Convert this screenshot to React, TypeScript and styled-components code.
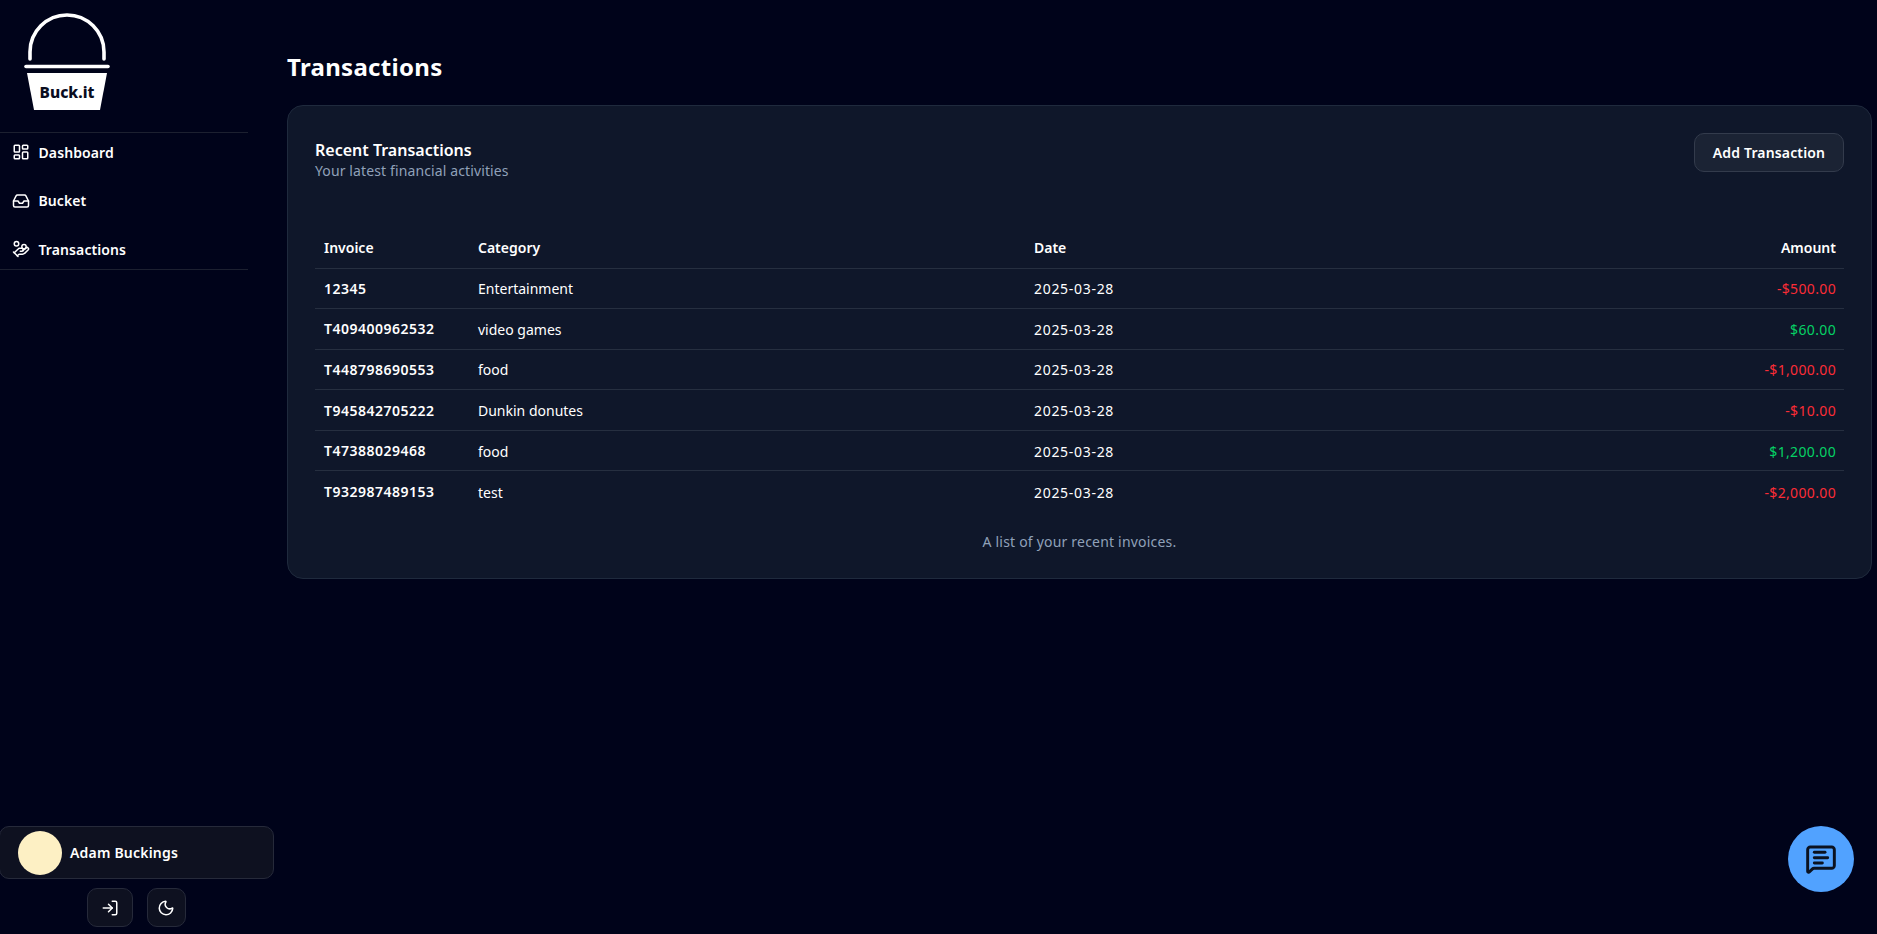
import React from "react";
import styled, { createGlobalStyle } from "styled-components";
import { LayoutDashboard, Inbox, HandCoins, LogIn, Moon, MessageSquareText } from "lucide-react";

const Global = createGlobalStyle`
  html, body { margin: 0; padding: 0; height: 100%; background: #00031a; }
  body { font-family: "Noto Sans", "Open Sans", sans-serif; color: #fff; overflow: hidden; }
  * { box-sizing: border-box; }
`;

const Shell = styled.div`
  display: flex;
  height: 934px;
  background: #00031a;
`;
const Sidebar = styled.aside`
  width: 248px;
  flex: none;
  display: flex;
  flex-direction: column;
`;
const LogoWrap = styled.div`
  height: 133px;
  flex: none;
  padding-left: 22px;
  border-bottom: 1px solid #1c2030;
`;
const Nav = styled.nav`
  display: flex;
  flex-direction: column;
  gap: 10.5px;
  height: 137px;
  flex: none;
  padding: 0 0 0 12px;
  border-bottom: 1px solid #1c2030;
`;
const NavItem = styled.a`
  display: flex;
  align-items: center;
  gap: 8.5px;
  height: 38px;
  flex: none;
  font-size: 14px;
  font-weight: 600;
  letter-spacing: 0.1px;
  color: #fff;
`;
const UserArea = styled.div`
  margin-top: auto;
  margin-left: -1px;
  display: flex;
  flex-direction: column;
  align-items: center;
  width: 275px;
  padding-bottom: 7px;
`;
const UserCard = styled.div`
  width: 275px;
  height: 53px;
  display: flex;
  align-items: center;
  gap: 8px;
  padding-left: 18px;
  background: #0e1120;
  border: 1px solid #262a3a;
  border-radius: 10px;
`;
const Avatar = styled.div`
  width: 44px;
  height: 44px;
  border-radius: 50%;
  background: #fdf0c4;
`;
const UserName = styled.span`
  font-size: 14px;
  font-weight: 600;
  letter-spacing: 0.2px;
`;
const IconRow = styled.div`
  display: flex;
  gap: 13.5px;
  margin-top: 9px;
`;
const IconButton = styled.button<{ $w: number }>`
  width: ${(p) => p.$w}px;
  height: 39px;
  display: flex;
  align-items: center;
  justify-content: center;
  background: #0e1120;
  border: 1px solid #262a3a;
  border-radius: 10px;
  color: #fff;
  padding: 0;
`;
const Main = styled.main`
  flex: 1;
  min-width: 0;
  padding: 50px 5px 0 39px;
`;
const Title = styled.h1`
  margin: 0 0 21px;
  font-size: 24px;
  line-height: 34px;
  font-weight: 700;
  letter-spacing: 0.3px;
`;
const Card = styled.section`
  height: 474px;
  padding: 27px 27px 0;
  background: #0f172a;
  border: 1px solid #1f2a3d;
  border-radius: 16px;
`;
const CardHeader = styled.div`
  display: flex;
  justify-content: space-between;
  align-items: flex-start;
  height: 76px;
`;
const CardTitle = styled.h2`
  margin: 7px 0 0;
  font-size: 16px;
  line-height: 20px;
  font-weight: 600;
`;
const CardSub = styled.p`
  margin: 2px 0 0;
  font-size: 14px;
  line-height: 18px;
  letter-spacing: 0.12px;
  color: #90a1b9;
`;
const AddButton = styled.button`
  width: 150px;
  height: 39px;
  background: #1b2334;
  border: 1px solid #333b4c;
  border-radius: 10px;
  color: #fff;
  font: 600 14px "Noto Sans", sans-serif;
  letter-spacing: 0.15px;
`;
const Table = styled.table`
  width: 100%;
  border-collapse: collapse;
  table-layout: fixed;
  margin-top: 18px;
  font-size: 14px;
`;
const HeadCell = styled.th<{ $w?: number; $right?: boolean; $first?: boolean }>`
  ${(p) => (p.$w ? `width: ${p.$w}px;` : "")}
  height: 41px;
  padding: 0 8px 0 ${(p) => (p.$first ? 9 : 8)}px;
  font-weight: 600;
  text-align: ${(p) => (p.$right ? "right" : "left")};
  border-bottom: 1px solid #262f40;
`;
const Row = styled.tr`
  height: 40.6px;
  border-bottom: 1px solid #262f40;
  &:last-child { border-bottom: none; }
`;
const InvoiceCell = styled.td`
  padding: 0 8px 0 9px;
  font-weight: 600;
  letter-spacing: 0.5px;
`;
const Cell = styled.td`
  padding: 1px 8px 0;
`;
const DateCell = styled.td`
  padding: 1px 8px 0;
  letter-spacing: 0.7px;
`;
const Amount = styled.td<{ $pos: boolean }>`
  padding: 1px 8px 0;
  text-align: right;
  letter-spacing: 0.35px;
  color: ${(p) => (p.$pos ? "#05d165" : "#fb2c36")};
`;
const Caption = styled.p`
  margin: 20px 0 0;
  text-align: center;
  font-size: 14px;
  line-height: 20px;
  letter-spacing: 0.2px;
  color: #90a1b9;
`;
const Fab = styled.button`
  position: fixed;
  right: 23px;
  bottom: 42px;
  width: 66px;
  height: 66px;
  border-radius: 50%;
  border: none;
  padding: 0;
  background: #51a2ff;
  color: #0b1220;
  display: flex;
  align-items: center;
  justify-content: center;
`;

const rows = [
  ["12345", "Entertainment", "-$500.00", false],
  ["T409400962532", "video games", "$60.00", true],
  ["T448798690553", "food", "-$1,000.00", false],
  ["T945842705222", "Dunkin donutes", "-$10.00", false],
  ["T47388029468", "food", "$1,200.00", true],
  ["T932987489153", "test", "-$2,000.00", false],
] as const;

function Logo() {
  return (
    <svg width="100" height="112" viewBox="0 0 100 112" fill="none" style={{ display: "block" }}>
      <path d="M8 59 V52 A37 37 0 0 1 82 52 V59" stroke="#fff" strokeWidth="3.6" strokeLinecap="round" />
      <path d="M4 66.500 H86" stroke="#fff" strokeWidth="3.6" strokeLinecap="round" />
      <path d="M5 73 H85 L78 110 H12 Z" fill="#fff" />
      <text x="45" y="97.500" textAnchor="middle" fontFamily="Noto Sans, sans-serif" fontWeight="800" fontSize="15.500" fill="#0a0d1f">
        Buck.it
      </text>
    </svg>
  );
}

export default function App() {
  return (
    <>
      <Global />
      <Shell>
        <Sidebar>
          <LogoWrap>
            <Logo />
          </LogoWrap>
          <Nav>
            <NavItem><LayoutDashboard size={18} />Dashboard</NavItem>
            <NavItem><Inbox size={18} />Bucket</NavItem>
            <NavItem><HandCoins size={18} />Transactions</NavItem>
          </Nav>
          <UserArea>
            <UserCard>
              <Avatar />
              <UserName>Adam Buckings</UserName>
            </UserCard>
            <IconRow>
              <IconButton $w={46}><LogIn size={18} /></IconButton>
              <IconButton $w={39}><Moon size={18} /></IconButton>
            </IconRow>
          </UserArea>
        </Sidebar>
        <Main>
          <Title>Transactions</Title>
          <Card>
            <CardHeader>
              <div>
                <CardTitle>Recent Transactions</CardTitle>
                <CardSub>Your latest financial activities</CardSub>
              </div>
              <AddButton>Add Transaction</AddButton>
            </CardHeader>
            <Table>
              <thead>
                <tr>
                  <HeadCell $w={155} $first>Invoice</HeadCell>
                  <HeadCell $w={556}>Category</HeadCell>
                  <HeadCell>Date</HeadCell>
                  <HeadCell $right>Amount</HeadCell>
                </tr>
              </thead>
              <tbody>
                {rows.map(([id, cat, amt, pos]) => (
                  <Row key={id}>
                    <InvoiceCell>{id}</InvoiceCell>
                    <Cell>{cat}</Cell>
                    <DateCell>2025-03-28</DateCell>
                    <Amount $pos={pos}>{amt}</Amount>
                  </Row>
                ))}
              </tbody>
            </Table>
            <Caption>A list of your recent invoices.</Caption>
          </Card>
        </Main>
      </Shell>
      <Fab><MessageSquareText size={32} strokeWidth={2.2} /></Fab>
    </>
  );
}
